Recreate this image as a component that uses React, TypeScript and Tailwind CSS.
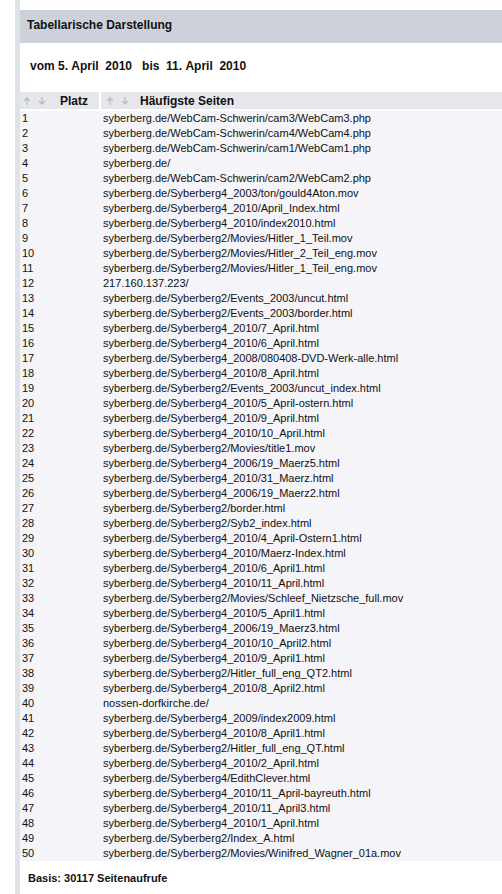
import React from "react";

const pages = [
  "syberberg.de/WebCam-Schwerin/cam3/WebCam3.php",
  "syberberg.de/WebCam-Schwerin/cam4/WebCam4.php",
  "syberberg.de/WebCam-Schwerin/cam1/WebCam1.php",
  "syberberg.de/",
  "syberberg.de/WebCam-Schwerin/cam2/WebCam2.php",
  "syberberg.de/Syberberg4_2003/ton/gould4Aton.mov",
  "syberberg.de/Syberberg4_2010/April_Index.html",
  "syberberg.de/Syberberg4_2010/index2010.html",
  "syberberg.de/Syberberg2/Movies/Hitler_1_Teil.mov",
  "syberberg.de/Syberberg2/Movies/Hitler_2_Teil_eng.mov",
  "syberberg.de/Syberberg2/Movies/Hitler_1_Teil_eng.mov",
  "217.160.137.223/",
  "syberberg.de/Syberberg2/Events_2003/uncut.html",
  "syberberg.de/Syberberg2/Events_2003/border.html",
  "syberberg.de/Syberberg4_2010/7_April.html",
  "syberberg.de/Syberberg4_2010/6_April.html",
  "syberberg.de/Syberberg4_2008/080408-DVD-Werk-alle.html",
  "syberberg.de/Syberberg4_2010/8_April.html",
  "syberberg.de/Syberberg2/Events_2003/uncut_index.html",
  "syberberg.de/Syberberg4_2010/5_April-ostern.html",
  "syberberg.de/Syberberg4_2010/9_April.html",
  "syberberg.de/Syberberg4_2010/10_April.html",
  "syberberg.de/Syberberg2/Movies/title1.mov",
  "syberberg.de/Syberberg4_2006/19_Maerz5.html",
  "syberberg.de/Syberberg4_2010/31_Maerz.html",
  "syberberg.de/Syberberg4_2006/19_Maerz2.html",
  "syberberg.de/Syberberg2/border.html",
  "syberberg.de/Syberberg2/Syb2_index.html",
  "syberberg.de/Syberberg4_2010/4_April-Ostern1.html",
  "syberberg.de/Syberberg4_2010/Maerz-Index.html",
  "syberberg.de/Syberberg4_2010/6_April1.html",
  "syberberg.de/Syberberg4_2010/11_April.html",
  "syberberg.de/Syberberg2/Movies/Schleef_Nietzsche_full.mov",
  "syberberg.de/Syberberg4_2010/5_April1.html",
  "syberberg.de/Syberberg4_2006/19_Maerz3.html",
  "syberberg.de/Syberberg4_2010/10_April2.html",
  "syberberg.de/Syberberg4_2010/9_April1.html",
  "syberberg.de/Syberberg2/Hitler_full_eng_QT2.html",
  "syberberg.de/Syberberg4_2010/8_April2.html",
  "nossen-dorfkirche.de/",
  "syberberg.de/Syberberg4_2009/index2009.html",
  "syberberg.de/Syberberg4_2010/8_April1.html",
  "syberberg.de/Syberberg2/Hitler_full_eng_QT.html",
  "syberberg.de/Syberberg4_2010/2_April.html",
  "syberberg.de/Syberberg4/EdithClever.html",
  "syberberg.de/Syberberg4_2010/11_April-bayreuth.html",
  "syberberg.de/Syberberg4_2010/11_April3.html",
  "syberberg.de/Syberberg4_2010/1_April.html",
  "syberberg.de/Syberberg2/Index_A.html",
  "syberberg.de/Syberberg2/Movies/Winifred_Wagner_01a.mov",
];

function SortArrows() {
  return (
    <span className="flex items-center gap-[5px] text-[#b8bcc4]">
      <svg width="10" height="10" viewBox="0 0 10 10">
        <path d="M5 9V2M2 5l3-3 3 3" stroke="currentColor" strokeWidth="1.3" fill="none" />
      </svg>
      <svg width="10" height="10" viewBox="0 0 10 10">
        <path d="M5 1v7M2 5l3 3 3-3" stroke="currentColor" strokeWidth="1.3" fill="none" />
      </svg>
    </span>
  );
}

export default function App() {
  return (
    <div className="min-h-[894px] bg-white pl-[15px] font-['Liberation_Sans',Arial,sans-serif] text-[#111]">
      <div className="min-h-[894px] border-l-[5px] border-[#dfe2e7] pt-[10px]">
        <div className="flex h-[33px] items-center bg-[#ccd1da] pb-[4px] pl-[7px] text-[12px] font-bold">
          Tabellarische Darstellung
        </div>
        <div className="pl-[10px] pt-[14px] text-[12px] font-bold">
          vom 5.&nbsp;April&nbsp;&nbsp;2010&nbsp;&nbsp; bis&nbsp;&nbsp;11.&nbsp;April&nbsp;&nbsp;2010
        </div>
        <div className="mt-[17px]">
          <div className="flex h-[17px] gap-[2px] text-[12px] font-bold">
            <div className="flex w-[79px] items-center gap-[13px] bg-[#e6e7ec] pl-[2px]">
              <SortArrows />
              <span>Platz</span>
            </div>
            <div className="flex flex-1 items-center gap-[10px] bg-[#e6e7ec] pl-[4px]">
              <SortArrows />
              <span>Häufigste Seiten</span>
            </div>
          </div>
          <div className="mt-[2px] bg-[#f4f4f9] text-[11px] leading-[15px]">
            {pages.map((p, i) => (
              <div key={i} className="flex h-[15px]">
                <span className="w-[81px] pl-[2px]">{i + 1}</span>
                <span className="pl-[2px]">{p}</span>
              </div>
            ))}
          </div>
        </div>
        <div className="pl-[8px] pt-[9px] text-[11px] font-bold">
          Basis: 30117 Seitenaufrufe
        </div>
      </div>
    </div>
  );
}
